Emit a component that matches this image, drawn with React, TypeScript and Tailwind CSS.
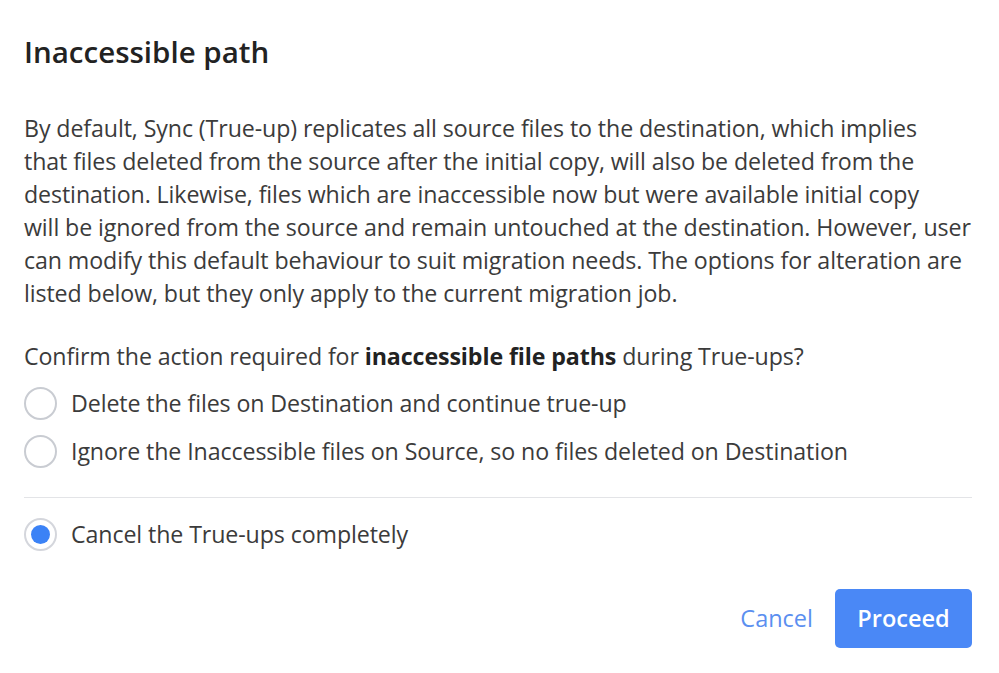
import React, { useState } from "react";

const options = [
  { id: "delete", label: "Delete the files on Destination and continue true-up" },
  {
    id: "ignore",
    label: "Ignore the Inaccessible files on Source, so no files deleted on Destination",
  },
];

function Radio({ checked }: { checked: boolean }) {
  return (
    <span
      className={`flex h-[33px] w-[33px] shrink-0 items-center justify-center rounded-full border-2 ${
        checked ? "border-[#d4d6dc]" : "border-[#c9ccd2]"
      } bg-white`}
    >
      {checked && <span className="h-[19px] w-[19px] rounded-full bg-[#3b82f6]" />}
    </span>
  );
}

export default function App() {
  const [choice, setChoice] = useState("cancel");

  return (
    <div className="h-[673px] w-[999px] bg-white font-['Open_Sans',sans-serif] text-[#3b3b3b]">
      <div className="px-6 pt-[31px]">
        <h1 className="text-[29.5px] font-semibold leading-[42px] text-[#222]">Inaccessible path</h1>

        <p className="mt-[39px] whitespace-nowrap text-[23.2px] leading-[33px] tracking-[-0.1px]">
          By default, Sync (True-up) replicates all source files to the destination, which implies
          <br />
          that files deleted from the source after the initial copy, will also be deleted from the
          <br />
          destination. Likewise, files which are inaccessible now but were available initial copy
          <br />
          will be ignored from the source and remain untouched at the destination. However, user
          <br />
          can modify this default behaviour to suit migration needs. The options for alteration are
          <br />
          listed below, but they only apply to the current migration job.
        </p>

        <p className="mt-[30px] text-[23.2px] leading-[33px] tracking-[-0.1px]">
          Confirm the action required for <span className="font-bold text-[#222]">inaccessible file paths</span>{" "}
          during True-ups?
        </p>

        <div className="mt-[14px] flex flex-col gap-[15px]">
          {options.map((o) => (
            <label
              key={o.id}
              className="flex cursor-pointer items-center gap-[14px] text-[23.2px] leading-[33px] tracking-[-0.1px]"
              onClick={() => setChoice(o.id)}
            >
              <Radio checked={choice === o.id} />
              {o.label}
            </label>
          ))}
        </div>

        <div className="mt-[29px] h-px w-[948px] bg-[#e3e4e7]" />

        <label
          className="mt-[20px] flex cursor-pointer items-center gap-[14px] text-[23.2px] leading-[33px] tracking-[-0.1px]"
          onClick={() => setChoice("cancel")}
        >
          <Radio checked={choice === "cancel"} />
          Cancel the True-ups completely
        </label>

        <div className="mt-[38px] flex w-[948px] items-center justify-end gap-[22px]">
          <button className="text-[23.5px] text-[#5b8ff0]">Cancel</button>
          <button className="h-[59px] w-[137px] rounded-[5px] bg-[#4a88f6] text-[23.5px] font-semibold text-white">
            Proceed
          </button>
        </div>
      </div>
    </div>
  );
}
